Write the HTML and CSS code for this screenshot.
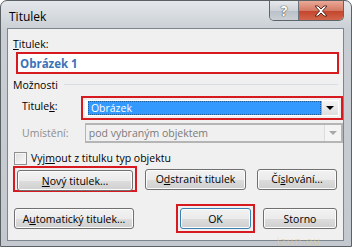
FILE: index.html
```html
<!DOCTYPE html>
<html lang="cs">
<head>
    <meta charset="UTF-8">
    <title>Titulek</title>
    <link rel="stylesheet" href="styles.css">
</head>
<body>
    <div class="window">
        <div class="titlebar">
            <span class="title">Titulek</span>
            <div class="caption-buttons">
                <div class="cap-btn help">?</div>
                <div class="cap-btn close">
                    <svg width="14" height="12" viewBox="0 0 14 12">
                        <path d="M1 1h3l3 3 3-3h3l-4.5 5 4.5 5h-3l-3-3-3 3h-3l4.5-5z" fill="#fff" stroke="#5a2a20" stroke-width="1"/>
                    </svg>
                </div>
            </div>
        </div>
        <div class="client">
            <div class="label"><u>T</u>itulek:</div>
            <div class="mark field-mark">
                <div class="text-field">Obrázek 1</div>
            </div>

            <div class="group-head">
                <span>Možnosti</span>
                <span class="group-line"></span>
            </div>

            <div class="row">
                <span class="row-label">Titule<u>k</u>:</span>
                <div class="mark combo-mark">
                    <div class="combo">
                        <div class="combo-value selected">Obrázek</div>
                        <div class="combo-arrow"><span class="tri"></span></div>
                    </div>
                </div>
            </div>

            <div class="row row-disabled">
                <span class="row-label">Umístění:</span>
                <div class="combo combo-off">
                    <div class="combo-value">pod vybraným objektem</div>
                    <div class="combo-arrow"><span class="tri"></span></div>
                </div>
            </div>

            <div class="check-row">
                <span class="checkbox"></span>
                <span>Vyj<u>m</u>out z titulku typ objektu</span>
            </div>

            <div class="btn-row">
                <div class="mark btn-mark">
                    <div class="btn btn-new"><u>N</u>ový titulek...</div>
                </div>
                <div class="btn btn-del">O<u>d</u>stranit titulek</div>
                <div class="btn btn-num">Čí<u>s</u>lování...</div>
            </div>

            <div class="btn-row bottom-row">
                <div class="btn btn-auto">A<u>u</u>tomatický titulek...</div>
                <div class="mark ok-mark">
                    <div class="btn btn-ok">OK</div>
                </div>
                <div class="btn btn-cancel">Storno</div>
            </div>
        </div>
        <div class="watermark">izun.eu</div>
    </div>
</body>
</html>
```

FILE: styles.css
```css
body {
    margin: 0;
    background: #fff;
    font-family: "Open Sans", "DejaVu Sans", sans-serif;
    font-size: 10.5px;
    color: #000;
}
u {
    text-decoration: underline;
    text-underline-offset: 1px;
}
.window {
    width: 350px;
    height: 245px;
    border: 1px solid #5c6166;
    border-radius: 7px 7px 0 0;
    background: linear-gradient(#e4e7ea, #c8ced4 30px, #c3c9cf);
    display: flex;
    flex-direction: column;
    position: relative;
}
.titlebar {
    height: 27px;
    display: flex;
    align-items: flex-start;
    justify-content: space-between;
}
.title {
    margin: 7px 0 0 8px;
    font-size: 12px;
}
.caption-buttons {
    display: flex;
    margin-right: 7px;
    border: 1px solid #5d646c;
    border-top: none;
    border-radius: 0 0 5px 5px;
    overflow: hidden;
    height: 19px;
}
.cap-btn {
    display: flex;
    align-items: center;
    justify-content: center;
}
.help {
    width: 28px;
    border-right: 1px solid #6b737c;
    background: linear-gradient(#e6e9ec, #cdd2d8 50%, #b9c0c7 51%, #c9cfd5);
    color: #fff;
    font-weight: bold;
    font-size: 14px;
    text-shadow: 0 0 1px #333, 0 0 1px #333;
}
.close {
    width: 44px;
    background: linear-gradient(#eaa998, #d47a64 50%, #c4432c 51%, #d2654a);
}
.client {
    flex: 1;
    margin: 0 7px 5px 6px;
    border: 1px solid #7d858e;
    background: #f0f0f0;
    padding: 8px 0 0 5px;
}
.label {
    height: 15px;
    line-height: 15px;
}
.mark {
    border: 2px solid #d71920;
    box-sizing: border-box;
}
.field-mark {
    margin: 0 0 0 3px;
    width: 323px;
    height: 22px;
    background: #fff;
}
.text-field {
    padding: 2px 0 0 2px;
    color: #3a72b8;
    font-weight: bold;
    font-size: 11.5px;
}
.group-head {
    display: flex;
    align-items: center;
    margin-top: 3px;
    height: 15px;
    padding-right: 5px;
}
.group-line {
    flex: 1;
    height: 1px;
    margin-left: 6px;
    background: #d5dfe5;
}
.row {
    display: flex;
    align-items: center;
}
.row-label {
    width: 60px;
    padding-left: 9px;
}
.combo-mark {
    width: 267px;
    height: 24px;
    padding: 2px;
    margin-top: 4px;
}
.combo {
    display: flex;
    align-items: stretch;
    height: 18px;
    border: 1px solid #a0a0a0;
    background: #fff;
    box-sizing: border-box;
}
.combo-mark .combo {
    height: 16px;
    border-color: #fff;
    padding: 0 0 0 2px;
}
.combo-value {
    flex: 1;
    padding-left: 3px;
    line-height: 15px;
}
.selected {
    background: #3399ff;
    color: #fff;
    outline: 1px dotted #1c5a9c;
    outline-offset: -1px;
}
.combo-arrow {
    width: 16px;
    border-left: 1px solid #a8a8a8;
    background: linear-gradient(#f4f4f4, #dedede);
    display: flex;
    align-items: center;
    justify-content: center;
}
.tri {
    width: 0;
    height: 0;
    border-left: 4px solid transparent;
    border-right: 4px solid transparent;
    border-top: 4px solid #000;
}
.row-disabled {
    margin-top: 3px;
    color: #8d8d8d;
}
.row-disabled .row-label {
    width: 63px;
}
.combo-off {
    width: 259px;
    height: 20px;
    background: #f0f0f0;
    border-color: #b5b5b5;
    border-width: 2px 2px 2px 1px;
}
.combo-off .combo-value {
    color: #7a7a7a;
    line-height: 16px;
}
.combo-off .combo-arrow {
    border-color: #dcdcdc;
    background: #f4f4f4;
}
.combo-off .tri {
    border-top-color: #a8a8a8;
}
.check-row {
    display: flex;
    align-items: center;
    margin-top: 8px;
    height: 14px;
}
.checkbox {
    width: 11px;
    height: 11px;
    margin: 0 4px 0 1px;
    border: 1px solid #8e8f8f;
    background: linear-gradient(135deg, #dcdcdc, #fbfbfb);
    box-shadow: inset 0 0 0 1px #f5f5f5;
}
.btn-row {
    display: flex;
    align-items: center;
    margin-top: 1px;
}
.btn {
    height: 21px;
    box-sizing: border-box;
    border: 1px solid #707070;
    border-radius: 3px;
    background: linear-gradient(#f2f2f2, #ebebeb 50%, #dddddd 51%, #cfcfcf);
    box-shadow: inset 0 0 0 1px #fcfcfc;
    display: flex;
    align-items: center;
    justify-content: center;
}
.btn-mark {
    padding: 2px;
    width: 124px;
    height: 26px;
}
.btn-new {
    width: 116px;
}
.btn-del {
    width: 101px;
    margin-left: 8px;
}
.btn-num {
    width: 80px;
    margin-left: 11px;
}
.bottom-row {
    margin-top: 12px;
}
.btn-auto {
    width: 120px;
    margin-left: 1px;
}
.ok-mark {
    margin-left: 42px;
    width: 79px;
    height: 29px;
    padding: 2px;
}
.btn-ok {
    width: 71px;
    border-color: #3c7fb1;
}
.btn-cancel {
    width: 74px;
    margin-left: 8px;
}
.watermark {
    position: absolute;
    right: 30px;
    bottom: -2px;
    color: rgba(225, 205, 140, 0.6);
    font-size: 11px;
    letter-spacing: 1px;
}
```
